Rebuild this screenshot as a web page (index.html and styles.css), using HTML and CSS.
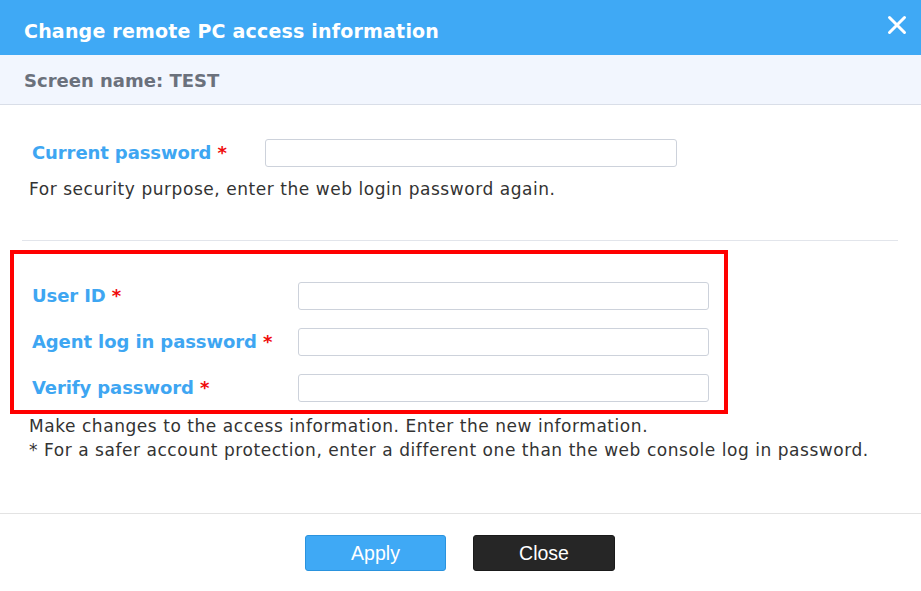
FILE: index.html
```html
<!DOCTYPE html>
<html lang="en">
<head>
<meta charset="utf-8">
<title>Change remote PC access information</title>
<link rel="stylesheet" href="styles.css">
</head>
<body>
<div class="dialog">
  <div class="dlg-header">
    <span class="dlg-title">Change remote PC access information</span>
    <span class="dlg-close" aria-label="Close">
      <svg width="20" height="20" viewBox="0 0 20 20"><path d="M2.5 2.5 L17.5 17.5 M17.5 2.5 L2.5 17.5" stroke="#fff" stroke-width="3" stroke-linecap="round"/></svg>
    </span>
  </div>
  <div class="dlg-sub">Screen name: TEST</div>
  <div class="dlg-body">
    <div class="row row-current">
      <label class="lbl lbl-current">Current password <span class="req">*</span></label>
      <input class="inp inp-current" type="password">
    </div>
    <p class="help help-current">For security purpose, enter the web login password again.</p>
    <div class="sep"></div>
    <div class="highlight">
      <div class="row">
        <label class="lbl lbl-wide">User ID <span class="req">*</span></label>
        <input class="inp inp-wide" type="text">
      </div>
      <div class="row">
        <label class="lbl lbl-wide">Agent log in password <span class="req">*</span></label>
        <input class="inp inp-wide" type="password">
      </div>
      <div class="row">
        <label class="lbl lbl-wide">Verify password <span class="req">*</span></label>
        <input class="inp inp-wide" type="password">
      </div>
    </div>
    <p class="help help-access">Make changes to the access information. Enter the new information.<br>* For a safer account protection, enter a different one than the web console log in password.</p>
  </div>
  <div class="dlg-footer">
    <button class="btn btn-apply">Apply</button>
    <button class="btn btn-close">Close</button>
  </div>
</div>
</body>
</html>
```

FILE: styles.css
```css
* { box-sizing: border-box; }
html, body { margin: 0; padding: 0; background: #ffffff; }
body { font-family: "DejaVu Sans", Verdana, sans-serif; }

.dialog { width: 921px; height: 591px; background: #fff; }

.dlg-header {
  height: 55px;
  background: #3fa9f5;
  display: flex;
  align-items: center;
  justify-content: space-between;
  padding: 0 14px 0 24px;
}
.dlg-title {
  color: #fff;
  font-weight: bold;
  font-size: 19px;
  letter-spacing: 0.2px;
  padding-top: 6px;
}
.dlg-close { display: flex; width: 20px; height: 20px; margin-top: -6px; }

.dlg-sub {
  height: 50px;
  background: #f2f6fe;
  border-bottom: 1px solid #d9dee8;
  color: #6b717c;
  font-weight: bold;
  font-size: 18px;
  padding-left: 24px;
  display: flex;
  align-items: center;
  padding-top: 2px;
}

.dlg-body { padding: 34px 0 0 0; height: 408px; }

.row { display: flex; align-items: center; height: 28px; }
.row-current { padding-left: 32px; }

.lbl {
  color: #3ea6f2;
  font-weight: bold;
  font-size: 18px;
  letter-spacing: -0.1px;
  white-space: nowrap;
  padding-bottom: 2px;
}
.req { color: #f00b0b; }
.lbl-current { width: 233px; }
.lbl-wide { width: 266px; }

.inp {
  height: 28px;
  border: 1px solid #cdd2db;
  border-radius: 3px;
  background: #fff;
  outline: none;
  padding: 0 6px;
  font-size: 14px;
}
.inp-current { width: 412px; }
.inp-wide { width: 411px; }

.help {
  margin: 0;
  color: #333333;
  font-size: 17px;
  letter-spacing: 0.55px;
  line-height: 24px;
  padding-left: 29px;
}
.help-current { margin-top: 10px; }

.sep {
  height: 1px;
  background: #e2e5eb;
  margin: 39px 23px 9px 22px;
}

.highlight {
  margin-left: 10px;
  width: 718px;
  border: 4px solid #ff0000;
  padding: 28px 0 8px 18px;
  display: flex;
  flex-direction: column;
  gap: 18px;
}

.help-access { margin-top: 0; }

.dlg-footer {
  border-top: 1px solid #e3e3e3;
  display: flex;
  justify-content: center;
  gap: 27px;
  padding: 21px 1px 0 0;
}
.btn {
  height: 36px;
  width: 141px;
  border-radius: 3px;
  font-family: "Liberation Sans", Arial, sans-serif;
  font-size: 19.5px;
  color: #fff;
  cursor: pointer;
  padding: 0;
}
.btn-apply { background: #3fa9f5; border: 1px solid #2a93de; }
.btn-close { background: #262626; border: 1px solid #1a1a1a; width: 142px; }
```
